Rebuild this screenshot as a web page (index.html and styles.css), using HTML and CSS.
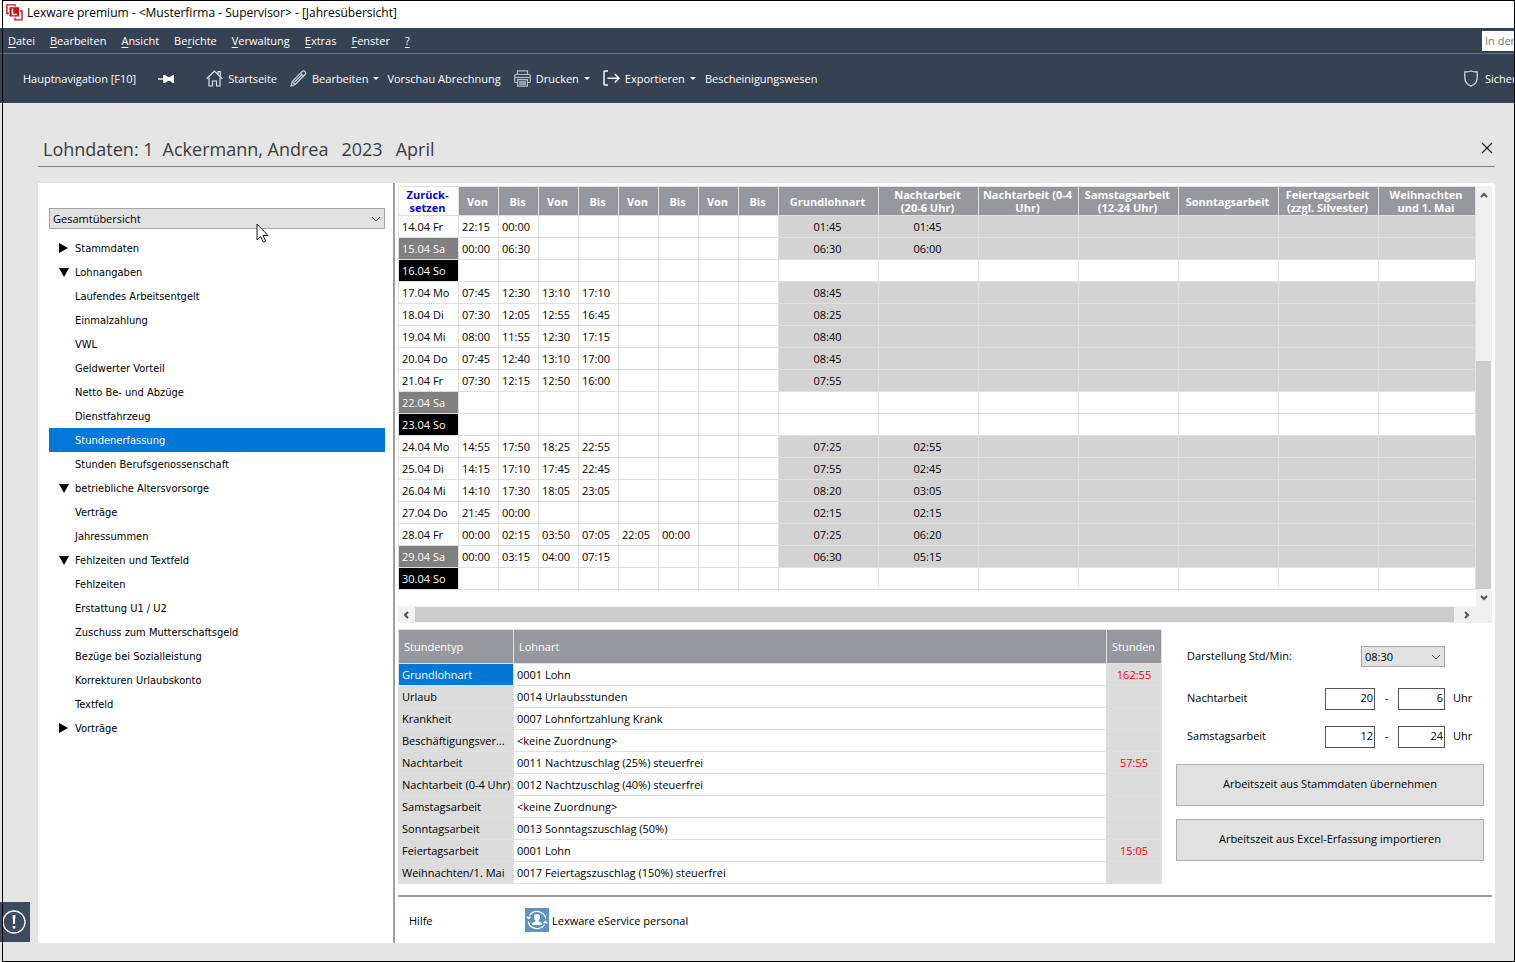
FILE: index.html
```html
<!DOCTYPE html>
<html lang="de">
<head>
  <meta charset="UTF-8" />
  <meta name="viewport" content="width=device-width, initial-scale=1" />
  <title>Lexware premium</title>
  <link rel="stylesheet" href="styles.css">
</head>
<body>
  <header>
    <div class="titlebar">
      <svg class="logo" width="17" height="17" viewBox="0 0 17 17" fill="none" stroke="#cc1018" stroke-width="1.400">
        <path d="M9 2.500V.9H.9v8.600h2"/>
        <path d="M9 13.500v2.400h7V7h-2"/>
        <rect x="3.500" y="3.200" width="9.500" height="9.300" fill="#d20a11" stroke="none"/>
        <path d="M6.500 4.500v6h4.500" stroke="#fff" stroke-width="1.600"/>
      </svg>
      <h1>Lexware premium - &lt;Musterfirma - Supervisor&gt; - [Jahresübersicht]</h1>
    </div>

    <div class="menubar">
      <nav>
        <a href="#"><u>D</u>atei</a>
        <a href="#"><u>B</u>earbeiten</a>
        <a href="#"><u>A</u>nsicht</a>
        <a href="#">Be<u>r</u>ichte</a>
        <a href="#"><u>V</u>erwaltung</a>
        <a href="#"><u>E</u>xtras</a>
        <a href="#"><u>F</u>enster</a>
        <a href="#"><u>?</u></a>
      </nav>
      <input class="search" type="text" placeholder="In der" aria-label="Suche" />
    </div>

    <div class="toolbar">
      <button class="nav-toggle">Hauptnavigation [F10]</button>
      <button class="pin" aria-label="Anheften">
        <svg width="16" height="10" viewBox="0 0 16 10"><path d="M0 4h5v2H0z" fill="#b9c1ca"/><path d="M5 1h2l3 2h2l3-2h1v8h-1l-3-2h-2L7 9H5z" fill="#fff"/></svg>
      </button>
      <button class="tool">
        <svg width="17" height="17" viewBox="0 0 17 17" fill="none" stroke="#dde1e6" stroke-width="1.2"><path d="M.7 8.7 8.5 1l7.8 7.7"/><path d="M12 4V1.700h2.300V6.500"/><path d="M3 7.500V16h3.500v-5h4v5H14V7.500"/></svg>
        Startseite
      </button>
      <button class="tool edit">
        <svg width="17" height="17" viewBox="0 0 17 17" fill="none" stroke="#ccd2d9" stroke-width="1.200"><path d="M1 16l1.200-4.500L12 1.600c1-1 2.200-.8 2.900-.1s1.200 2 .2 3L5.200 14.500z"/><path d="M10.500 3.200l3.200 3.200M2.200 11.500l3 3M4.500 12 12 4.700"/></svg>
        Bearbeiten <i class="caret"></i>
      </button>
      <button class="tool preview">Vorschau Abrechnung</button>
      <button class="tool print">
        <svg width="17" height="17" viewBox="0 0 17 17" fill="none" stroke="#b4bdc8" stroke-width="1.200"><path d="M3.500 4.500V.8h10v3.700M3.500 12.500H1.600C1 12.500.7 12 .7 11.500v-6c0-.6.4-1 1-1h13.600c.6 0 1 .4 1 1v6c0 .6-.4 1-1 1h-1.800"/><path d="M1 7.500h15"/><path d="M3.600 9.700h9.800v6.500H3.600z"/><path d="M5 12h7M5 14h7" stroke-width="1.500"/></svg>
        Drucken <i class="caret"></i>
      </button>
      <button class="tool export">
        <svg width="17" height="17" viewBox="0 0 17 17" fill="none" stroke="#f3f5f7" stroke-width="1.500"><path d="M5 1H1.700C1.200 1 1 1.300 1 1.700v12.600c0 .4.200.7.700.7H5M4.500 8.200H16M11.800 4 16 8.200l-4.200 4.200"/></svg>
        Exportieren <i class="caret"></i>
      </button>
      <button class="tool">Bescheinigungswesen</button>
      <button class="tool backup">
        <svg width="14" height="17" viewBox="0 0 14 17" fill="none" stroke="#cfd5dc" stroke-width="1.300"><path d="M7 1c-2 .9-4 1-6.200 1v5.500c0 4 2.200 7 6.200 8.600 4-1.600 6.200-4.600 6.200-8.600V2C11 2 9 1.900 7 1z"/></svg>
        Sichern
      </button>
    </div>
  </header>

  <main>
    <div class="page-head">
      <h2><span>Lohndaten: 1</span><span>Ackermann, Andrea</span><span>2023</span><span>April</span></h2>
      <button class="close" aria-label="Schließen">
        <svg width="12" height="12" viewBox="0 0 12 12" stroke="#222" stroke-width="1.200"><path d="M1 1l10 10M11 1 1 11"/></svg>
      </button>
    </div>

    <div class="panel">
      <aside>
        <div class="select-box">
          <select aria-label="Ansicht">
            <option>Gesamtübersicht</option>
          </select>
          <svg class="chevron" width="10" height="6" viewBox="0 0 10 6"><path d="M1 1l4 4 4-4"/></svg>
          <svg class="cursor" width="13" height="20" viewBox="0 0 13 20"><path d="M1 1v16l3.600-3.500 2.600 5.500 2.400-1.100L7 12.500h5z" fill="#fff" stroke="#1a1a2a"/></svg>
        </div>

        <ul class="tree">
          <li class="closed"><a href="#">Stammdaten</a></li>
          <li class="open"><a href="#">Lohnangaben</a>
            <ul>
              <li><a href="#">Laufendes Arbeitsentgelt</a></li>
              <li><a href="#">Einmalzahlung</a></li>
              <li><a href="#">VWL</a></li>
              <li><a href="#">Geldwerter Vorteil</a></li>
              <li><a href="#">Netto Be- und Abzüge</a></li>
              <li><a href="#">Dienstfahrzeug</a></li>
              <li><a href="#" class="active">Stundenerfassung</a></li>
              <li><a href="#">Stunden Berufsgenossenschaft</a></li>
            </ul>
          </li>
          <li class="open"><a href="#">betriebliche Altersvorsorge</a>
            <ul>
              <li><a href="#">Verträge</a></li>
              <li><a href="#">Jahressummen</a></li>
            </ul>
          </li>
          <li class="open"><a href="#">Fehlzeiten und Textfeld</a>
            <ul>
              <li><a href="#">Fehlzeiten</a></li>
              <li><a href="#">Erstattung U1 / U2</a></li>
              <li><a href="#">Zuschuss zum Mutterschaftsgeld</a></li>
              <li><a href="#">Bezüge bei Sozialleistung</a></li>
              <li><a href="#">Korrekturen Urlaubskonto</a></li>
              <li><a href="#">Textfeld</a></li>
            </ul>
          </li>
          <li class="closed"><a href="#">Vorträge</a></li>
        </ul>
      </aside>

      <section class="content">
        <div class="hours-area">
          <table class="hours">
            <colgroup>
              <col class="day">
              <col class="time" span="8">
              <col class="sum" span="6">
              <col>
            </colgroup>
            <thead>
              <tr>
                <th class="reset"><a href="#">Zurück-<br>setzen</a></th>
                <th>Von</th><th>Bis</th><th>Von</th><th>Bis</th><th>Von</th><th>Bis</th><th>Von</th><th>Bis</th>
                <th>Grundlohnart</th>
                <th>Nachtarbeit<br>(20-6 Uhr)</th>
                <th>Nachtarbeit (0-4<br>Uhr)</th>
                <th>Samstagsarbeit<br>(12-24 Uhr)</th>
                <th>Sonntagsarbeit</th>
                <th>Feiertagsarbeit<br>(zzgl. Silvester)</th>
                <th>Weihnachten<br>und 1. Mai</th>
              </tr>
            </thead>
            <tbody>
              <tr><th>14.04 Fr</th><td>22:15</td><td>00:00</td><td></td><td></td><td></td><td></td><td></td><td></td><td>01:45</td><td>01:45</td><td></td><td></td><td></td><td></td><td></td></tr>
              <tr class="sa"><th>15.04 Sa</th><td>00:00</td><td>06:30</td><td></td><td></td><td></td><td></td><td></td><td></td><td>06:30</td><td>06:00</td><td></td><td></td><td></td><td></td><td></td></tr>
              <tr class="so free"><th>16.04 So</th><td></td><td></td><td></td><td></td><td></td><td></td><td></td><td></td><td></td><td></td><td></td><td></td><td></td><td></td><td></td></tr>
              <tr><th>17.04 Mo</th><td>07:45</td><td>12:30</td><td>13:10</td><td>17:10</td><td></td><td></td><td></td><td></td><td>08:45</td><td></td><td></td><td></td><td></td><td></td><td></td></tr>
              <tr><th>18.04 Di</th><td>07:30</td><td>12:05</td><td>12:55</td><td>16:45</td><td></td><td></td><td></td><td></td><td>08:25</td><td></td><td></td><td></td><td></td><td></td><td></td></tr>
              <tr><th>19.04 Mi</th><td>08:00</td><td>11:55</td><td>12:30</td><td>17:15</td><td></td><td></td><td></td><td></td><td>08:40</td><td></td><td></td><td></td><td></td><td></td><td></td></tr>
              <tr><th>20.04 Do</th><td>07:45</td><td>12:40</td><td>13:10</td><td>17:00</td><td></td><td></td><td></td><td></td><td>08:45</td><td></td><td></td><td></td><td></td><td></td><td></td></tr>
              <tr><th>21.04 Fr</th><td>07:30</td><td>12:15</td><td>12:50</td><td>16:00</td><td></td><td></td><td></td><td></td><td>07:55</td><td></td><td></td><td></td><td></td><td></td><td></td></tr>
              <tr class="sa free"><th>22.04 Sa</th><td></td><td></td><td></td><td></td><td></td><td></td><td></td><td></td><td></td><td></td><td></td><td></td><td></td><td></td><td></td></tr>
              <tr class="so free"><th>23.04 So</th><td></td><td></td><td></td><td></td><td></td><td></td><td></td><td></td><td></td><td></td><td></td><td></td><td></td><td></td><td></td></tr>
              <tr><th>24.04 Mo</th><td>14:55</td><td>17:50</td><td>18:25</td><td>22:55</td><td></td><td></td><td></td><td></td><td>07:25</td><td>02:55</td><td></td><td></td><td></td><td></td><td></td></tr>
              <tr><th>25.04 Di</th><td>14:15</td><td>17:10</td><td>17:45</td><td>22:45</td><td></td><td></td><td></td><td></td><td>07:55</td><td>02:45</td><td></td><td></td><td></td><td></td><td></td></tr>
              <tr><th>26.04 Mi</th><td>14:10</td><td>17:30</td><td>18:05</td><td>23:05</td><td></td><td></td><td></td><td></td><td>08:20</td><td>03:05</td><td></td><td></td><td></td><td></td><td></td></tr>
              <tr><th>27.04 Do</th><td>21:45</td><td>00:00</td><td></td><td></td><td></td><td></td><td></td><td></td><td>02:15</td><td>02:15</td><td></td><td></td><td></td><td></td><td></td></tr>
              <tr><th>28.04 Fr</th><td>00:00</td><td>02:15</td><td>03:50</td><td>07:05</td><td>22:05</td><td>00:00</td><td></td><td></td><td>07:25</td><td>06:20</td><td></td><td></td><td></td><td></td><td></td></tr>
              <tr class="sa"><th>29.04 Sa</th><td>00:00</td><td>03:15</td><td>04:00</td><td>07:15</td><td></td><td></td><td></td><td></td><td>06:30</td><td>05:15</td><td></td><td></td><td></td><td></td><td></td></tr>
              <tr class="so free"><th>30.04 So</th><td></td><td></td><td></td><td></td><td></td><td></td><td></td><td></td><td></td><td></td><td></td><td></td><td></td><td></td><td></td></tr>
            </tbody>
          </table>
          <div class="vscroll">
            <svg class="arrow" width="8" height="6" viewBox="0 0 8 6"><path d="M1 5l3-3 3 3"/></svg>
            <div class="thumb"></div>
            <svg class="arrow" width="8" height="6" viewBox="0 0 8 6"><path d="M1 1l3 3 3-3"/></svg>
          </div>
        </div>
        <div class="hscroll">
          <svg class="arrow" width="6" height="8" viewBox="0 0 6 8"><path d="M5 1 2 4l3 3"/></svg>
          <div class="thumb"></div>
          <svg class="arrow" width="6" height="8" viewBox="0 0 6 8"><path d="M1 1l3 3-3 3"/></svg>
        </div>

        <div class="lower">
          <table class="types">
            <colgroup>
              <col class="type">
              <col>
              <col class="total">
            </colgroup>
            <thead>
              <tr><th>Stundentyp</th><th>Lohnart</th><th>Stunden</th></tr>
            </thead>
            <tbody>
              <tr class="selected"><th>Grundlohnart</th><td>0001 Lohn</td><td>162:55</td></tr>
              <tr><th>Urlaub</th><td>0014 Urlaubsstunden</td><td></td></tr>
              <tr><th>Krankheit</th><td>0007 Lohnfortzahlung Krank</td><td></td></tr>
              <tr><th>Beschäftigungsver...</th><td>&lt;keine Zuordnung&gt;</td><td></td></tr>
              <tr><th>Nachtarbeit</th><td>0011 Nachtzuschlag (25%) steuerfrei</td><td>57:55</td></tr>
              <tr><th>Nachtarbeit (0-4 Uhr)</th><td>0012 Nachtzuschlag (40%) steuerfrei</td><td></td></tr>
              <tr><th>Samstagsarbeit</th><td>&lt;keine Zuordnung&gt;</td><td></td></tr>
              <tr><th>Sonntagsarbeit</th><td>0013 Sonntagszuschlag (50%)</td><td></td></tr>
              <tr><th>Feiertagsarbeit</th><td>0001 Lohn</td><td>15:05</td></tr>
              <tr><th>Weihnachten/1. Mai</th><td>0017 Feiertagszuschlag (150%) steuerfrei</td><td></td></tr>
            </tbody>
          </table>

          <form class="settings">
            <div class="field">
              <label for="display">Darstellung Std/Min:</label>
              <div class="select-box small">
                <select id="display"><option>08:30</option></select>
                <svg class="chevron" width="10" height="6" viewBox="0 0 10 6"><path d="M1 1l4 4 4-4"/></svg>
              </div>
              <span class="unit"></span>
            </div>
            <div class="field">
              <label for="nightFrom">Nachtarbeit</label>
              <input id="nightFrom" class="from" type="text" value="20" />
              <span class="dash">-</span>
              <input class="to" type="text" value="6" aria-label="Nachtarbeit bis" />
              <span class="unit">Uhr</span>
            </div>
            <div class="field">
              <label for="satFrom">Samstagsarbeit</label>
              <input id="satFrom" class="from" type="text" value="12" />
              <span class="dash">-</span>
              <input class="to" type="text" value="24" aria-label="Samstagsarbeit bis" />
              <span class="unit">Uhr</span>
            </div>
            <button type="button">Arbeitszeit aus Stammdaten übernehmen</button>
            <button type="button">Arbeitszeit aus Excel-Erfassung importieren</button>
          </form>
        </div>

        <footer>
          <a href="#" class="help">Hilfe</a>
          <a href="#" class="service">
            <svg width="24" height="24" viewBox="0 0 24 24"><path d="M0 0h24v24H0z" fill="#5b93c5"/><g fill="none" stroke="#fff" stroke-width="1.200"><path d="M4.500 7.500a9 9 0 0 1 16.300 3M19.500 16.500a9 9 0 0 1-16.300-3"/></g><path d="M1 8.500l2.500 3 3-2.500zM23 15.500l-2.500-3-3 2.500zM12 6a3 3 0 0 0-3 3.200c0 1.300.6 2.300 1.400 3v1.300L7 15v2h10v-2l-3.400-1.500v-1.300c.8-.7 1.400-1.700 1.400-3A3 3 0 0 0 12 6z" fill="#fff"/></svg>
            Lexware eService personal
          </a>
        </footer>
      </section>
    </div>

    <button class="notice" aria-label="Hinweise">
      <svg width="24" height="24" viewBox="0 0 24 24"><circle cx="12" cy="12" r="11" fill="none" stroke="#fff" stroke-width="1.300"/><path d="M10.500 5h3l-.7 9h-1.600zM10.700 16h2.600v2.500h-2.600z" fill="#fff"/></svg>
    </button>
  </main>
</body>
</html>
```

FILE: styles.css
```css
* { margin: 0; padding: 0; box-sizing: border-box; }
body {
  font-family: "Open Sans", "Noto Sans", sans-serif;
  font-size: 11px;
  line-height: 13px;
  color: #000;
  background: #e5e5e5;
  min-height: 100vh;
  display: flex;
  flex-direction: column;
  position: relative;
  overflow-x: hidden;
}
/* window frame */
body::after {
  content: "";
  position: absolute;
  inset: 0 0 0 2px;
  border: 1px solid #000;
  pointer-events: none;
}
a { color: inherit; text-decoration: none; }
button, input, select { font: inherit; color: inherit; }
button { cursor: pointer; }
ul { list-style: none; }

.titlebar {
  height: 28px;
  background: #fff;
  display: flex;
  align-items: center;
  gap: 4px;
  padding: 0 6px 3px;
}
.titlebar h1 {
  font-size: 12px;
  font-weight: 400;
}
.menubar {
  height: 26px;
  background: #354254;
  border-bottom: 1px solid #62738a;
  color: #fff;
  display: flex;
  align-items: center;
  justify-content: space-between;
  padding-left: 8px;
}
.menubar nav {
  display: flex;
  gap: 15px;
}
.menubar u { text-underline-offset: 2px; }
.search {
  width: 33px;
  height: 20px;
  border: none;
  padding-left: 3px;
  background: #fff;
}
.search::placeholder { color: #777; opacity: 1; }
.toolbar {
  height: 49px;
  background: #354254;
  color: #fff;
  display: flex;
  align-items: center;
  padding-left: 23px;
  overflow: hidden;
}
.toolbar button {
  background: none;
  border: none;
  display: flex;
  align-items: center;
  gap: 5px;
  white-space: nowrap;
  flex: none;
}
.toolbar svg { flex: none; }
.toolbar .pin { margin: 0 32px 0 22px; }
.toolbar .tool { margin-right: 9px; }
.toolbar .tool:nth-child(3), .toolbar .preview { margin-right: 13px; }
.toolbar .edit { margin-right: 8px; }
.toolbar .print { margin-right: 13px; }
.caret {
  border: 3px solid transparent;
  border-top-color: #fff;
  border-bottom: none;
}
.toolbar .backup {
  width: 51px;
  margin: 0 0 0 auto;
  gap: 7px;
  overflow: hidden;
}

main {
  flex: 1;
  display: flex;
  flex-direction: column;
  padding: 33px 20px 19px 38px;
  position: relative;
}
.page-head {
  height: 31px;
  border-bottom: 1px solid #808080;
  display: flex;
  justify-content: space-between;
  align-items: center;
  padding: 0 2px 4px 5px;
  margin-bottom: 16px;
}
.page-head h2 {
  font-size: 18px;
  line-height: 24px;
  font-weight: 400;
  color: #3c3c3c;
  display: flex;
  gap: 13px;
}
.page-head h2 span:first-child { margin-right: -4px; }
.close {
  background: none;
  border: none;
  line-height: 0;
  padding-bottom: 3px;
}
.panel {
  flex: 1;
  background: #fff;
  display: flex;
}

aside {
  width: 355px;
  flex: none;
  padding: 25px 8px 0 11px;
}
.select-box { position: relative; }
.select-box select {
  appearance: none;
  display: block;
  width: 100%;
  height: 21px;
  padding: 0 3px;
  background: #e1e1e1;
  border: 1px solid #a5a5a5;
  border-radius: 0;
}
.chevron {
  position: absolute;
  right: 4px;
  top: 8px;
  fill: none;
  stroke: #444;
  pointer-events: none;
}
.cursor {
  position: absolute;
  left: 207px;
  top: 15px;
  pointer-events: none;
}
.tree {
  font-family: "DejaVu Sans Condensed", "DejaVu Sans", sans-serif;
  margin-top: 7px;
}
.tree a {
  display: flex;
  align-items: center;
  height: 24px;
  padding-left: 26px;
}
.open > a, .closed > a { padding-left: 10px; }
.open > a::before {
  content: "";
  border: 5px solid transparent;
  border-top: 9px solid #000;
  border-bottom: none;
  margin-right: 6px;
}
.closed > a::before {
  content: "";
  border: 5px solid transparent;
  border-left: 9px solid #000;
  border-right: none;
  margin-right: 7px;
}
.tree .active {
  background: #0078d7;
  color: #fff;
}

.content {
  flex: 1;
  min-width: 0;
  border-left: 2px solid #a0a0a0;
  padding: 3px 3px 0;
  display: flex;
  flex-direction: column;
}
table {
  border-collapse: separate;
  border-spacing: 0;
  table-layout: fixed;
  border-left: 1px solid #e0e0e0;
  border-top: 1px solid #e0e0e0;
}
th, td {
  border-right: 1px solid #e0e0e0;
  border-bottom: 1px solid #e0e0e0;
  white-space: nowrap;
  overflow: hidden;
}
tbody th {
  font-weight: 400;
  text-align: left;
  padding-left: 3px;
}
thead th {
  background: #97989d;
  color: #fff;
}
.hours-area {
  display: flex;
  height: 420px;
}
.hours {
  flex: 1;
  width: 100%;
  align-self: flex-start;
}
.hours .day { width: 60px; }
.hours .time { width: 40px; }
.hours .sum { width: 100px; }
.hours thead tr { height: 29px; }
.hours thead th { padding-right: 2px; }
.hours tbody tr { height: 22px; }
.hours td { padding-left: 3px; }
.hours td:nth-child(n+10) {
  background: #d3d3d3;
  padding: 0 2px 0 0;
  text-align: center;
}
.hours .free td:nth-child(n+10) { background: #fff; }
.hours .reset {
  background: #fff;
  color: #0000e6;
}
.sa th { background: #808080; color: #fff; }
.so th { background: #000; color: #fff; }

.vscroll, .hscroll {
  background: #f0f0f0;
  display: flex;
  align-items: center;
}
.vscroll {
  width: 16px;
  flex-direction: column;
  padding: 6px 1px 5px 0;
  flex: none;
}
.vscroll .thumb {
  width: 15px;
  height: 228px;
  margin: auto 0 6px;
  background: #cdcdcd;
}
.hscroll {
  height: 17px;
  padding: 0 22px 0 5px;
  gap: 6px;
}
.hscroll .thumb {
  flex: 1;
  height: 15px;
  background: #cdcdcd;
  margin-right: 4px;
}
.arrow {
  fill: none;
  stroke: #505050;
  stroke-width: 2;
  flex: none;
}

.lower {
  display: flex;
  margin-top: 6px;
  padding-bottom: 11px;
  border-bottom: 2px solid #a0a0a0;
}
.types {
  flex: 1;
  width: 100%;
}
.types .type { width: 115px; }
.types .total { width: 55px; }
.types thead tr { height: 34px; }
.types tbody tr { height: 22px; }
.types thead th {
  font-weight: 400;
  text-align: left;
  padding-left: 5px;
}
.types tbody th { background: #dcdcdc; }
.types .selected th { background: #0078d7; color: #fff; }
.types td { padding-left: 3px; }
.types td:last-child {
  background: #dcdcdc;
  color: #f00;
  text-align: center;
  padding: 0;
}

.settings {
  width: 330px;
  flex: none;
  padding: 17px 8px 0 14px;
}
.field {
  display: flex;
  height: 22px;
  margin-bottom: 16px;
  padding-left: 11px;
}
.field:first-child { margin-bottom: 20px; }
.field label { flex: 1; }
.field label, .dash, .unit { line-height: 20px; }
.field input {
  height: 22px;
  border: 1px solid #555;
  text-align: right;
  padding: 0 1px 3px;
  background: #fff;
}
.field .from { width: 50px; }
.field .to { width: 47px; }
.dash { width: 23px; text-align: center; }
.unit { width: 39px; padding-left: 8px; }
.small { width: 84px; }
.settings button {
  display: block;
  width: 100%;
  height: 42px;
  padding-bottom: 3px;
  background: #e1e1e1;
  border: 1px solid #adadad;
  margin-bottom: 13px;
}

footer {
  display: flex;
  align-items: center;
  padding: 11px 11px 9px;
}
.help { width: 116px; }
.service {
  display: flex;
  align-items: center;
  gap: 3px;
}

.notice {
  position: absolute;
  left: 0;
  bottom: 20px;
  width: 30px;
  height: 40px;
  padding-right: 2px;
  border: none;
  background: #3a4b62;
  display: flex;
  align-items: center;
  justify-content: center;
}
```
